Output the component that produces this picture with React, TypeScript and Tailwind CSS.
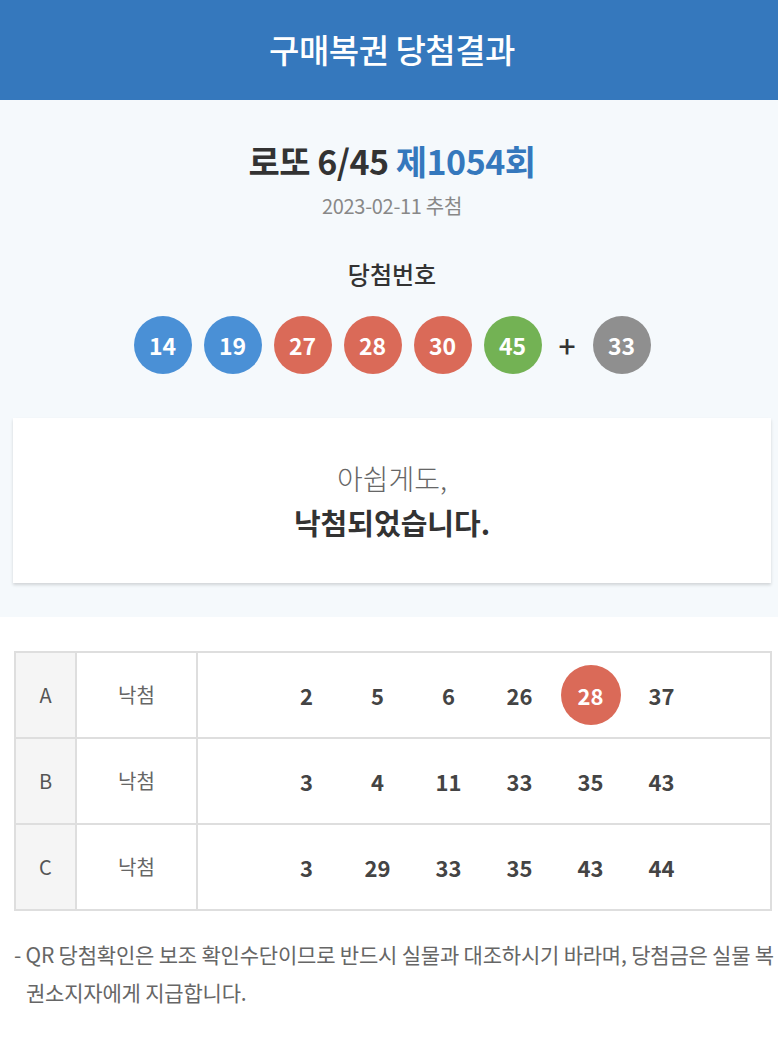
import React from 'react';

type Ball = { n: number; color: string };

const winning: Ball[] = [
  { n: 14, color: 'bg-[#4a90d6]' },
  { n: 19, color: 'bg-[#4a90d6]' },
  { n: 27, color: 'bg-[#da6a58]' },
  { n: 28, color: 'bg-[#da6a58]' },
  { n: 30, color: 'bg-[#da6a58]' },
  { n: 45, color: 'bg-[#73b254]' },
];
const bonus: Ball = { n: 33, color: 'bg-[#8f8f8f]' };

const games = [
  { slot: 'A', result: '낙첨', nums: [2, 5, 6, 26, 28, 37] },
  { slot: 'B', result: '낙첨', nums: [3, 4, 11, 33, 35, 43] },
  { slot: 'C', result: '낙첨', nums: [3, 29, 33, 35, 43, 44] },
];

// only the six main numbers get a marker
const matched = new Set(winning.map((b) => b.n));

function LottoBall({ ball }: { ball: Ball }) {
  return (
    <div className={`w-[58px] h-[58px] rounded-full flex items-center justify-center text-white text-[23px] font-bold ${ball.color}`}>
      {ball.n}
    </div>
  );
}

export default function App() {
  return (
    <div className="w-[778px] min-h-[1037px] overflow-hidden bg-white">
      <div className="w-[784px] font-['Noto_Sans_CJK_KR','Noto_Sans',sans-serif] text-[#333]">
        {/* Header */}
        <header className="h-[100px] bg-[#3578bd] flex items-center justify-center">
          <h1 className="text-white text-[33px] font-medium tracking-[-0.5px]">구매복권 당첨결과</h1>
        </header>

        {/* Draw summary */}
        <section className="bg-[#f5f9fc] pt-[36px] pb-[34px]">
          <div className="flex flex-col items-center">
            <h2 className="text-[34px] font-bold leading-[50px] tracking-[-0.5px]">
              로또 6/45 <span className="text-[#3578bd]">제1054회</span>
            </h2>
            <p className="text-[20px] text-[#888] leading-[30px] mt-[5px] tracking-[-0.3px]">2023-02-11 추첨</p>
            <p className="text-[24px] font-medium leading-[36px] mt-[35px]">당첨번호</p>
            <div className="flex items-center gap-[12px] mt-[24px]">
              {winning.map((b) => (
                <LottoBall key={b.n} ball={b} />
              ))}
              <span className="w-[27px] text-center text-[30px] font-medium leading-none text-[#333]">+</span>
              <LottoBall ball={bonus} />
            </div>
          </div>

          <div className="mx-[13px] mt-[44px] h-[165px] bg-white shadow-[0_2px_3px_rgba(0,0,0,0.15)] flex flex-col items-center justify-center">
            <p className="text-[28px] font-light text-[#666] leading-[40px]">아쉽게도,</p>
            <p className="text-[29px] font-bold text-[#333] leading-[42px] mt-[3px]">낙첨되었습니다.</p>
          </div>
        </section>

        {/* Purchased games */}
        <div className="pl-[14px] pr-[12px] mt-[34px]">
          <table className="w-full border-collapse border-2 border-[#dedede]">
            <tbody>
              {games.map((g) => (
                <tr key={g.slot} className="h-[86px]">
                  <td className="w-[61px] border-2 border-[#dedede] bg-[#f5f5f5] text-center text-[20px] text-[#555]">{g.slot}</td>
                  <td className="w-[121px] border-2 border-[#dedede] text-center text-[20px] text-[#666]">{g.result}</td>
                  <td className="border-2 border-[#dedede]">
                    <div className="flex justify-center">
                      {g.nums.map((n, i) => (
                        <div key={i} className="w-[71px] flex justify-center">
                          {matched.has(n) ? (
                            <div className="w-[60px] h-[60px] rounded-full bg-[#da6a58] text-white flex items-center justify-center text-[22px] font-bold">
                              {n}
                            </div>
                          ) : (
                            <div className="h-[60px] flex items-center text-[22px] font-bold text-[#444]">{n}</div>
                          )}
                        </div>
                      ))}
                    </div>
                  </td>
                </tr>
              ))}
            </tbody>
          </table>
        </div>

        {/* Notice */}
        <p className="ml-[14px] mr-[8px] mt-[24px] pl-[12px] -indent-[12px] text-[21px] leading-[38px] text-[#666] tracking-[-0.2px] break-all">
          - QR 당첨확인은 보조 확인수단이므로 반드시 실물과 대조하시기 바라며, 당첨금은 실물 복권소지자에게 지급합니다.
        </p>
      </div>
    </div>
  );
}
